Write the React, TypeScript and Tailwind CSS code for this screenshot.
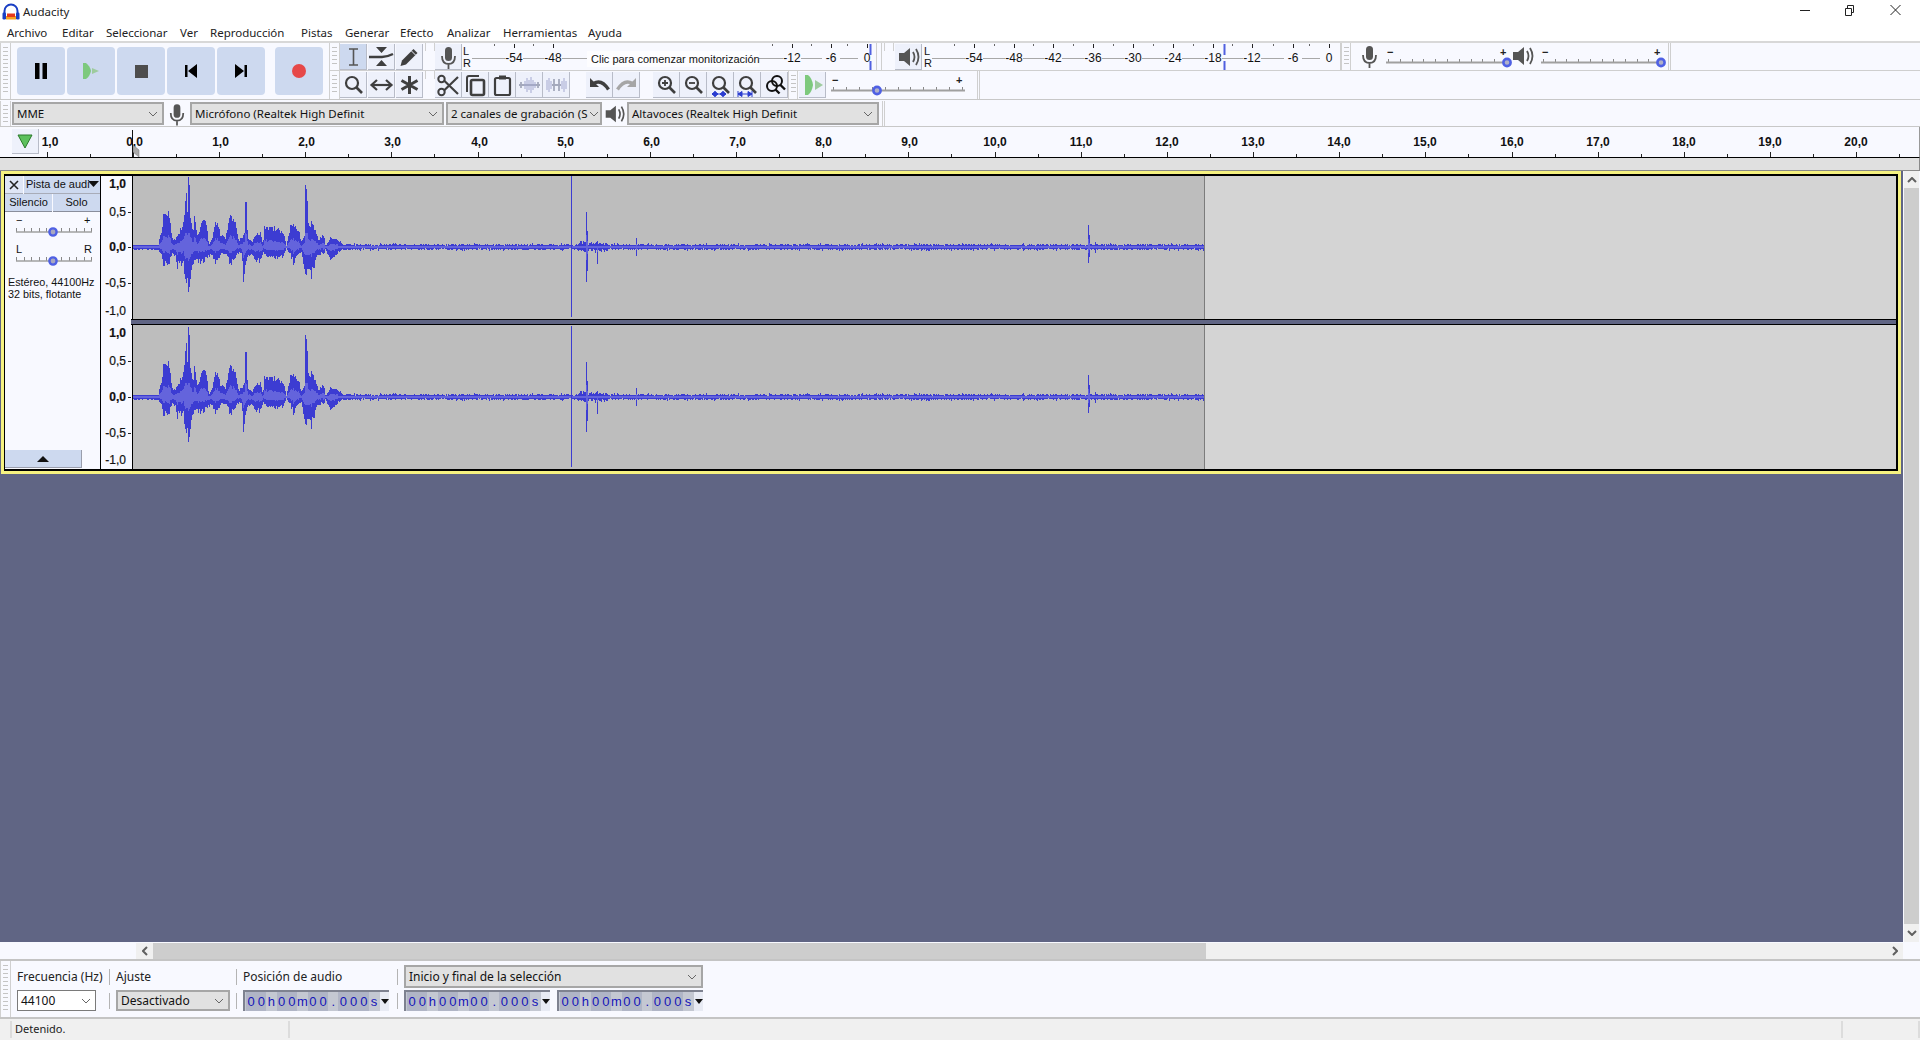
import React from "react";

const UI = "font-['Noto_Sans','Open_Sans',sans-serif]";
const AR = "font-['Liberation_Sans',Arial,sans-serif]";

function rng(seed: number) {
  return () => {
    seed |= 0;
    seed = (seed + 0x6d2b79f5) | 0;
    let t = Math.imul(seed ^ (seed >>> 15), 1 | seed);
    t = (t + Math.imul(t ^ (t >>> 7), 61 | t)) ^ t;
    return ((t ^ (t >>> 14)) >>> 0) / 4294967296;
  };
}

const K: number[][] = [
  [8, 205, 222], [85, 205, 222], [88, 170, 235], [95, 165, 240], [98, 100, 283], [103, 98, 280], [110, 100, 275], [116, 100, 270], [120, 125, 260], [125, 180, 240],
  [135, 190, 240], [140, 170, 300], [145, 170, 270], [150, 155, 270], [160, 130, 280], [165, 50, 320], [170, 100, 325], [174, 60, 330], [175, 3, 347], [177, 3, 347], [180, 100, 320],
  [185, 150, 280], [190, 150, 260], [192, 97, 260], [195, 120, 260], [200, 180, 265], [210, 140, 268], [218, 130, 268], [228, 125, 250], [235, 205, 245], [245, 185, 240],
  [255, 137, 265], [262, 135, 267], [270, 170, 240], [285, 185, 235], [298, 112, 270], [305, 115, 265], [315, 130, 245], [325, 190, 235], [335, 180, 240], [340, 175, 317],
  [343, 160, 317], [345, 78, 265], [347, 78, 265], [352, 180, 250], [365, 195, 235], [380, 165, 265], [390, 165, 270], [398, 205, 225], [402, 150, 240], [420, 150, 245],
  [440, 150, 250], [460, 165, 245], [468, 210, 215], [480, 145, 240], [490, 140, 270], [505, 155, 240], [512, 195, 225], [522, 180, 290], [525, 25, 295], [528, 25, 280], [531, 60, 280],
  [535, 140, 290], [542, 135, 305], [552, 150, 280], [565, 190, 235], [580, 170, 240], [586, 210, 218], [600, 180, 265], [615, 185, 240], [630, 195, 225], [640, 205, 220],
];

const SPIKES: Record<number, [number, number]> = {
  55: [70, 45], 56: [62, 40], 53: [54, 36],
  110: [12, 35], 112: [45, 18], 113: [45, 14],
  172: [62, 27], 173: [58, 28], 178: [26, 32],
  453: [35, 35], 454: [16, 24], 464: [6, 17], 503: [9, 9],
  955: [22, 16], 956: [12, 10], 962: [5, 6],
  438: [71, 70],
};

function wavePaths() {
  const r = rng(77);
  let peak = "";
  let rms = "";
  for (let x = 0; x < 1071; x++) {
    const zx = (x + 3) * 3;
    let top = 0;
    let bot = 0;
    if (zx <= 640) {
      let i = 0;
      while (i < K.length - 2 && K[i + 1][0] < zx) i++;
      const a = K[i];
      const b = K[i + 1];
      const t = Math.max(0, Math.min(1, (zx - a[0]) / (b[0] - a[0] || 1)));
      top = (212 - (a[1] + (b[1] - a[1]) * t)) / 3;
      bot = ((a[2] + (b[2] - a[2]) * t) - 212) / 3;
      top *= 0.76 + 0.24 * r();
      bot *= 0.62 + 0.38 * r();
    } else {
      top = 1.4 + r() * 1.6;
      bot = 1.4 + r() * 1.6;
      if (r() > 0.94) top += 1.5;
      if (r() > 0.94) bot += 1.5;
      if (x > 445 && x < 475) {
        top += r() * 3;
        bot += r() * 3;
      }
    }
    if (SPIKES[x]) {
      top = SPIKES[x][0];
      bot = SPIKES[x][1];
    }
    const R = (v: number) => Math.max(1, Math.round(v));
    peak += `M${x}.5 ${-R(top)}V${R(bot)}`;
    const rt = top > 6 ? top * (0.28 + 0.1 * r()) : 1;
    const rb = bot > 6 ? bot * (0.28 + 0.1 * r()) : 1;
    if (x !== 438) rms += `M${x}.5 ${-R(Math.min(rt, 14))}V${R(Math.min(rb, 14))}`;
  }
  return { peak, rms };
}
const WAVE = wavePaths();

function Wave({ h, c }: { h: number; c: number }) {
  return (
    <svg width={1071} height={h} viewBox={`0 ${-c} 1071 ${h}`} shapeRendering="crispEdges" className="block shrink-0">
      <path d={WAVE.peak} stroke="#3c3cd2" strokeWidth={1} fill="none" />
      <path d={WAVE.rms} stroke="#6464dc" strokeWidth={1} fill="none" />
    </svg>
  );
}

function Ico({ children, w = 27, h = 26 }: { children: React.ReactNode; w?: number; h?: number }) {
  return (
    <svg width={w} height={h} viewBox={`0 0 ${w} ${h}`} className="block">
      {children}
    </svg>
  );
}

const D = "#3f3f3f";
const IBeam = () => (
  <Ico><path d="M9 5h9M13.5 5v16M9 21h9" stroke="#555" strokeWidth={1.6} fill="none" /></Ico>
);
const Envelope = () => (
  <Ico>
    <path d="M8 3h11l-5.5 6zM8 22h11l-5.5-6z" fill={D} />
    <path d="M1 13h13q5 0 11-3" stroke={D} strokeWidth={2.4} fill="none" />
  </Ico>
);
const Pencil = () => (
  <Ico>
    <path d="M17.5 5l4 4L10 20.5l-5.5 1.5 1.5-5.5z" fill={D} />
    <path d="M15.5 7l4 4" stroke="#eef1fb" strokeWidth={1} />
  </Ico>
);
const Mag = ({ children }: { children?: React.ReactNode }) => (
  <Ico>
    <circle cx={12} cy={11} r={6} stroke={D} strokeWidth={2.2} fill="none" />
    <path d="M16.5 15.5L22 21" stroke={D} strokeWidth={2.6} />
    {children}
  </Ico>
);
const Arrows = () => (
  <Ico>
    <path d="M4 13h19" stroke={D} strokeWidth={2.2} />
    <path d="M9 8l-5.5 5 5.5 5M18 8l5.5 5-5.5 5" stroke={D} strokeWidth={2.2} fill="none" />
  </Ico>
);
const Star = () => (
  <Ico>
    <path d="M13.5 4v18M5.5 8.5l16 9M21.5 8.5l-16 9" stroke={D} strokeWidth={3} />
  </Ico>
);
const Cut = () => (
  <Ico>
    <circle cx={6.5} cy={20} r={3.2} stroke={D} strokeWidth={2} fill="none" />
    <circle cx={6.5} cy={7} r={3.2} stroke={D} strokeWidth={2} fill="none" />
    <path d="M9 18.5L23 5M9 8.5L23 22" stroke={D} strokeWidth={2.2} />
  </Ico>
);
const Copy = () => (
  <Ico>
    <path d="M5 20V6q0-2 2-2h10" stroke={D} strokeWidth={2} fill="none" />
    <rect x={9} y={8} width={13} height={15} rx={1.5} stroke={D} strokeWidth={2.6} fill="none" />
  </Ico>
);
const Paste = () => (
  <Ico>
    <rect x={6} y={6} width={15} height={17} rx={1.5} stroke={D} strokeWidth={2.2} fill="none" />
    <path d="M10 3.5h7v4h-7z" fill={D} />
  </Ico>
);
const Trim = () => (
  <Ico>
    <path d="M5 10v6M22 10v6M3 13h21" stroke="#a4a9bc" strokeWidth={1.8} fill="none" />
    <path d="M9 9v8M11 6v14M13 8v10M15 5v16M17 8v10M19 10v6" stroke="#a4a9d0" strokeWidth={1} />
  </Ico>
);
const Silence = () => (
  <Ico>
    <path d="M4 8v10M6 6v14M8 9v8M19 9v8M21 6v14M23 9v8" stroke="#a4a9d0" strokeWidth={1} />
    <path d="M11 7v12M16 7v12M9 13h9" stroke="#a4a9bc" strokeWidth={1.8} fill="none" />
  </Ico>
);
const Undo = ({ c = D }: { c?: string }) => (
  <Ico>
    <path d="M4 6v9h9z" fill={c} />
    <path d="M7.5 11.5q8-5 15 6" stroke={c} strokeWidth={3.4} fill="none" />
  </Ico>
);
const Redo = () => (
  <Ico>
    <g transform="matrix(-1 0 0 1 27 0)"><path d="M4 6v9h9z" fill="#a6a6a6" /><path d="M7.5 11.5q8-5 15 6" stroke="#a6a6a6" strokeWidth={3.4} fill="none" /></g>
  </Ico>
);
const Mic = ({ c = "#555" }: { c?: string }) => (
  <Ico>
    <rect x={10} y={3} width={7} height={14} rx={3.5} fill={c} />
    <path d="M7 12q0 8 6.5 8t6.5-8M13.5 20v5" stroke={c} strokeWidth={1.8} fill="none" />
  </Ico>
);
const Spk = ({ c = "#555" }: { c?: string }) => (
  <Ico>
    <path d="M4 9h5l6-5v18l-6-5H4z" fill={c} />
    <path d="M18 8q3 5 0 10M21 5q5 8 0 16" stroke={c} strokeWidth={1.8} fill="none" />
  </Ico>
);
const PlayGreen = () => (
  <Ico>
    <path d="M6 3h3q4 3 5 10-1 7-5 10H6z" fill="#7dc97d" />
    <path d="M16 8l8 5-8 5z" fill="#9ecb9e" />
  </Ico>
);
const Logo = () => (
  <svg width={18} height={18} viewBox="0 0 18 18" className="block">
    <path d="M2.5 11V8a6.5 6.5 0 0 1 13 0v3" stroke="#1a3fc4" strokeWidth={2} fill="none" />
    <rect x={0.5} y={9.5} width={3.5} height={7} rx={1.2} fill="#1a3fc4" />
    <rect x={14} y={9.5} width={3.5} height={7} rx={1.2} fill="#1a3fc4" />
    <path d="M4 13h10v3.5H4z" fill="#f6a020" />
    <path d="M5 10.5h8v3.5H5z" fill="#e8391c" />
  </svg>
);

function Btn({ children, on, mr }: { children: React.ReactNode; on?: boolean; mr?: string }) {
  return (
    <div
      className={`w-[27px] h-[26px] shrink-0 border-r border-b border-[#b8bcc8] ${on ? "bg-[#cdd9ef]" : "bg-[#eef1fb]"} ${mr ?? ""}`}
    >
      {children}
    </div>
  );
}

function Gripper({ w = "w-[10px]" }: { w?: string }) {
  return (
    <div className={`${w} self-stretch shrink-0 flex justify-center border-x border-[#d0d0d0] py-[4px]`}>
      <div className="w-[5px] h-full bg-[repeating-linear-gradient(180deg,#c4c4c4_0,#c4c4c4_1px,transparent_1px,transparent_4px)]" />
    </div>
  );
}

function TBtn({ children }: { children: React.ReactNode }) {
  return <div className="w-[48px] h-[48px] rounded-[4px] bg-[#cdd9ef] flex items-center justify-center shrink-0">{children}</div>;
}

function Combo({ w, text, tone = "bg-[#e1e1e1] border-[#a6a6a6]", h = "h-[23px]", size = "text-[11.5px]" }: { w: string; text: string; tone?: string; h?: string; size?: string }) {
  return (
    <div className={`${w} ${h} ${tone} ${size} shrink-0 border-2 flex items-center justify-between pl-[3px] pr-[4px] text-[#111] whitespace-nowrap overflow-hidden ${UI}`}>
      <span className="leading-[16px]">{text}</span>
      <svg width={10} height={6} viewBox="0 0 10 6" className="shrink-0 ml-[2px]"><path d="M1 1l4 4 4-4" stroke="#666" strokeWidth={1} fill="none" /></svg>
    </div>
  );
}

function Meter({ w, labels, blue, tip }: { w: number; labels: [string, number][]; blue: number; tip?: boolean }) {
  return (
    <svg width={w} height={28} viewBox={`0 0 ${w} 28`} className={`block shrink-0 ${AR}`}>
      <path d={`M0 15.5H${w}`} stroke="#a8a8a8" />
      {labels.map(([t, x], i) => (
        <g key={i}>
          <path d={`M${x}.5 1v4`} stroke="#222" />
          <path d={`M${x - 20}.5 1v2`} stroke="#666" />
          <rect x={x - 9} y={8} width={18} height={13} fill="#f8f9ff" />
          <text x={x} y={19} textAnchor="middle" fontSize={12} fill="#111">{t}</text>
        </g>
      ))}
      {tip && (
        <g>
          <rect x={115} y={8} width={172} height={16} fill="#fdfdff" />
          <text x={119} y={20} fontSize={11} fill="#111">Clic para comenzar monitorización</text>
        </g>
      )}
      <path d={`M${blue}.5 1v11M${blue}.5 18v9`} stroke="#5060e0" strokeWidth={2} />
    </svg>
  );
}

function Slider({ w, x }: { w: number; x: number }) {
  const ticks = [];
  for (let i = 0; i <= 10; i++) ticks.push(Math.round(2 + ((w - 8) * i) / 10));
  return (
    <svg width={w} height={28} viewBox={`0 0 ${w} 28`} className={`block shrink-0 ${AR}`}>
      <text x={1} y={13} fontSize={11} fontWeight={700} fill="#222">−</text>
      <text x={w - 12} y={13} fontSize={11} fontWeight={700} fill="#222">+</text>
      {ticks.map((t, i) => <path key={i} d={`M${t}.5 16v3`} stroke="#888" />)}
      <path d={`M0 19.5H${w - 3}`} stroke="#a0a0a0" strokeWidth={2} />
      <circle cx={x} cy={19.5} r={3.6} stroke="#4f60e4" strokeWidth={2.6} fill="#b0b0c8" />
    </svg>
  );
}

function Ruler() {
  const o = 133;
  const step = 86.16;
  const lab: React.ReactNode[] = [];
  for (let i = -1; i <= 20; i++) {
    const x = Math.round(o + step * i);
    const t = `${Math.abs(i)},0`;
    lab.push(
      <g key={i}>
        <path d={`M${x}.5 25v5`} stroke="#222" />
        <path d={`M${Math.round(x + step / 2)}.5 27v3`} stroke="#222" />
        <text x={x + (i < 0 ? 3 : i >= 10 ? 0 : 1.5)} y={19} textAnchor="middle" fontSize={12} fontWeight={700} fill="#111">{t}</text>
      </g>
    );
  }
  return (
    <svg width={1880} height={30} viewBox="39 0 1880 30" className={`block shrink-0 ${AR}`}>
      {lab}
      <path d="M133 18l6 5v7l-6-5z" fill="#a8a8a8" stroke="#777" strokeWidth={0.5} />
      <path d="M132.5 3v27" stroke="#111" />
    </svg>
  );
}

function VRuler({ ys }: { ys: [string, number][] }) {
  return (
    <svg width={31} height={ys[4][1] + 8} viewBox={`0 0 31 ${ys[4][1] + 8}`} className={`block ${AR}`}>
      {ys.map(([t, y]) => (
        <g key={t}>
          <text x={25} y={y + 4} textAnchor="end" fontSize={12} fontWeight={t === "1,0" || t === "0,0" ? 700 : 400} stroke="#111" strokeWidth={0.2} fill="#111">{t}</text>
          {t !== "1,0" && t !== "-1,0" && <path d={`M27 ${y}.5h3`} stroke="#222" />}
        </g>
      ))}
    </svg>
  );
}

function TrackRow({ h, c, ys }: { h: string; c: number; ys: [string, number][] }) {
  const px = h === "h-[143px]" ? 143 : 144;
  return (
    <div className={`${h} flex shrink-0`}>
      <div className="w-[32px] shrink-0 bg-[#f8f9ff] border-r border-black"><VRuler ys={ys} /></div>
      <div className="w-[1072px] shrink-0 bg-[#bdbdbd] border-r border-[#7c7c7c]"><Wave h={px} c={c} /></div>
      <div className="flex-1 bg-[#d4d4d4]" />
    </div>
  );
}

function PanelSlider({ l, r }: { l: string; r: string }) {
  const t = [];
  for (let i = 0; i <= 10; i++) t.push(Math.round(0 + 7.5 * i));
  return (
    <svg width={78} height={28} viewBox="0 0 78 28" className={`block ${AR}`}>
      <text x={0} y={10} fontSize={11} fill="#111">{l}</text>
      <text x={68} y={10} fontSize={11} fill="#111">{r}</text>
      {t.map((x, i) => <path key={i} d={`M${x}.5 14v4`} stroke="#888" />)}
      <path d="M0 18h76" stroke="#a0a0a0" strokeWidth={1.6} />
      <circle cx={37} cy={18} r={3.6} stroke="#4f60e4" strokeWidth={2.4} fill="#a8a8c0" />
    </svg>
  );
}

function Panel() {
  return (
    <div className={`w-[96px] shrink-0 bg-[#f8f9ff] border-r border-black flex flex-col ${AR} text-[#111]`}>
      <div className="flex h-[18px] gap-px">
        <div className="w-[18px] bg-[#dfe6f6] border-b border-[#a8acb8] flex items-center justify-center">
          <svg width={10} height={10} viewBox="0 0 10 10"><path d="M1 1l8 8M9 1l-8 8" stroke="#222" strokeWidth={1.6} /></svg>
        </div>
        <div className="w-[76px] bg-[#cdd9ef] border-b border-[#a8acb8] flex items-center pl-[2px] text-[11px] whitespace-nowrap relative">
          Pista de audi
          <svg width={11} height={6} viewBox="0 0 11 6" className="absolute right-[1px] top-[5px]"><path d="M0 0h11L5.5 6z" fill="#111" /></svg>
        </div>
      </div>
      <div className="flex h-[18px] gap-px text-[11px]">
        <div className="w-[47px] bg-[#cdd9ef] border-b border-[#8a8e9c] flex items-center justify-center">Silencio</div>
        <div className="w-[47px] bg-[#cdd9ef] border-b border-[#8a8e9c] flex items-center justify-center">Solo</div>
      </div>
      <div className="ml-[11px] mt-[2px]"><PanelSlider l="−" r="+" /></div>
      <div className="ml-[11px] mt-px"><PanelSlider l="L" r="R" /></div>
      <div className="ml-[3px] mt-[5px] text-[10.8px] leading-[12px]">
        <div>Estéreo, 44100Hz</div>
        <div>32 bits, flotante</div>
      </div>
      <div className="flex-1" />
      <div className="w-[77px] h-[18px] bg-[#cdd9ef] border-r border-b border-[#9a9eac] flex items-center justify-center mb-[1px]">
        <svg width={12} height={6} viewBox="0 0 12 6"><path d="M0 6h12L6 0z" fill="#111" /></svg>
      </div>
    </div>
  );
}

function TimeField({ w }: { w: string }) {
  const s = "00h00m00.000s".split("");
  return (
    <div className={`${w} h-[21px] shrink-0 flex border-t-2 border-l-2 border-[#7e8290] bg-[#c4c8d2]`}>
      <div className="flex-1 flex justify-between pl-[1px] pr-[1px] items-stretch">
        {s.map((c, i) => {
          const digit = c >= "0" && c <= "9";
          return (
            <span key={i} className={`flex-1 flex items-center justify-center text-[13px] leading-none text-[#1414b8] ${AR} ${digit ? "bg-[#b0b5c6]" : ""}`}>{c}</span>
          );
        })}
      </div>
      <div className="w-[9px] bg-[#e8ebf4] flex items-center justify-center">
        <svg width={8} height={5} viewBox="0 0 8 5"><path d="M0 0h8L4 5z" fill="#111" /></svg>
      </div>
    </div>
  );
}

const Sep = () => <div className="w-px h-[16px] bg-[#b4b4b4] shrink-0" />;

export default function App() {
  return (
    <div className={`w-[1920px] h-[1040px] overflow-hidden flex flex-col bg-[#f8f9ff] text-[#111] ${UI}`}>
      {/* title */}
      <div className="h-[24px] bg-white flex items-center shrink-0">
        <div className="ml-[2px]"><Logo /></div>
        <span className="ml-[3px] text-[11.5px] text-[#222]">Audacity</span>
        <div className="flex-1" />
        <svg width={120} height={20} viewBox="0 0 120 20" className="block -mt-[4px]">
          <path d="M0 10.5h10" stroke="#222" />
          <path d="M45.5 8.5h6v7h-6zM47.5 8V5.5h6v7H52" stroke="#222" fill="none" />
          <path d="M90.5 5l10 10M100.5 5l-10 10" stroke="#222" />
        </svg>
      </div>
      {/* menu */}
      <div className="h-[17px] bg-white flex items-center text-[11.5px] text-[#222] shrink-0 pl-[7px]">
        <span className="w-[55px]">Archivo</span>
        <span className="w-[44px]">Editar</span>
        <span className="w-[74px]">Seleccionar</span>
        <span className="w-[30px]">Ver</span>
        <span className="w-[91px]">Reproducción</span>
        <span className="w-[44px]">Pistas</span>
        <span className="w-[55px]">Generar</span>
        <span className="w-[47px]">Efecto</span>
        <span className="w-[56px]">Analizar</span>
        <span className="w-[85px]">Herramientas</span>
        <span>Ayuda</span>
      </div>
      <div className="h-[2px] bg-[#d8d8d8] shrink-0" />
      {/* toolbars */}
      <div className="flex shrink-0 h-[57px] border-b border-[#c8c8c8]">
        <div className="w-[329px] shrink-0 flex items-center">
          <Gripper w="w-[11px]" />
          <div className="ml-[6px] flex gap-[2px]">
            <TBtn><svg width={16} height={18} viewBox="0 0 16 18"><path d="M2 1h4.5v16H2zM9.5 1H14v16H9.5z" fill="#000" /></svg></TBtn>
            <TBtn><Ico w={20} h={20}><path d="M2 2h3q4 3 5 8-1 5-5 8H2z" fill="#7dc97d" /><path d="M11 7l7 3-7 3z" fill="#9ecb9e" /></Ico></TBtn>
            <TBtn><div className="w-[13px] h-[13px] bg-[#4d4d4d]" /></TBtn>
            <TBtn><svg width={14} height={14} viewBox="0 0 14 14"><path d="M1 1h2.5v12H1zM13 0v14L4 7z" fill="#000" /></svg></TBtn>
            <TBtn><svg width={14} height={14} viewBox="0 0 14 14"><path d="M13 1h-2.5v12H13zM1 0v14l9-7z" fill="#000" /></svg></TBtn>
          </div>
          <div className="ml-[10px]"><TBtn><div className="w-[14px] h-[14px] rounded-full bg-[#e64848]" /></TBtn></div>
        </div>
        <div className="flex-1 flex flex-col">
          <div className="h-[28px] flex border-b border-[#cfcfcf] shrink-0">
            <Gripper w="w-[11px]" />
            <div className="flex gap-px pt-px">
              <Btn on><IBeam /></Btn><Btn><Envelope /></Btn><Btn><Pencil /></Btn>
            </div>
            <div className="ml-[2px]"><Gripper w="w-[10px]" /></div>
            <div className="pt-px"><Btn><Mic /></Btn></div>
            <div className={`w-[10px] shrink-0 text-[11px] leading-[12px] pt-[2px] pl-px ${AR}`}><div>L</div><div>R</div></div>
            <Meter w={400} tip blue={398} labels={[["-54", 42], ["-48", 81], ["-12", 320], ["-6", 359], ["0", 395]]} />
            <div className="ml-[4px] w-[6px] border-x border-[#cfcfcf] self-stretch shrink-0" />
            <div className="ml-[2px]"><Gripper w="w-[10px]" /></div>
            <div className="ml-px pt-px"><Btn><Spk /></Btn></div>
            <div className={`w-[10px] shrink-0 text-[11px] leading-[12px] pt-[2px] pl-[2px] ${AR}`}><div>L</div><div>R</div></div>
            <Meter w={401} blue={292} labels={[["-54", 42], ["-48", 82], ["-42", 121], ["-36", 161], ["-30", 201], ["-24", 241], ["-18", 281], ["-12", 320], ["-6", 361], ["0", 397]]} />
            <div className="ml-[4px] w-[4px] border-r border-[#cfcfcf] self-stretch shrink-0" />
            <Gripper w="w-[10px]" />
            <div className="ml-[5px] w-[27px]"><Mic /></div>
            <div className="ml-[3px]"><Slider w={126} x={121} /></div>
            <div className="w-[27px] -ml-[3px]"><Spk /></div>
            <div className="ml-[5px]"><Slider w={125} x={120} /></div>
            <div className="ml-[2px] w-[3px] border-x border-[#cfcfcf] self-stretch shrink-0" />
          </div>
          <div className="flex-1 flex">
            <Gripper w="w-[11px]" />
            <div className="flex gap-px pt-px">
              <Btn><Mag /></Btn><Btn><Arrows /></Btn><Btn><Star /></Btn>
            </div>
            <div className="ml-[2px]"><Gripper w="w-[10px]" /></div>
            <div className="flex pt-px">
              <Btn><Cut /></Btn><Btn><Copy /></Btn><Btn><Paste /></Btn><Btn><Trim /></Btn><Btn><Silence /></Btn>
            </div>
            <div className="ml-[16px] flex pt-px">
              <Btn><Undo /></Btn><Btn><Redo /></Btn>
            </div>
            <div className="ml-[13px] flex pt-px">
              <Btn><Mag><path d="M9 11h6M12 8v6" stroke={D} strokeWidth={1.8} /></Mag></Btn>
              <Btn><Mag><path d="M9 11h6" stroke={D} strokeWidth={1.8} /></Mag></Btn>
              <Btn><Mag><path d="M5 22h14M5 22l3-2.5v5zM19 22l-3-2.5v5zM11 22l-3-2.5v5zM13 22l3-2.5v5z" stroke="#2a3cd0" strokeWidth={1} fill="#2a3cd0" /></Mag></Btn>
              <Btn><Mag><path d="M4 22h14M4 19v6M18 19v6M4 22l4-2.5v5zM18 22l-4-2.5v5z" stroke="#2a3cd0" strokeWidth={1} fill="#2a3cd0" /></Mag></Btn>
              <Btn><Ico>
                <circle cx={11} cy={14} r={5} stroke="#111" strokeWidth={2} fill="none" />
                <circle cx={16} cy={9} r={5} stroke="#111" strokeWidth={2} fill="none" />
                <path d="M19 12.5l5 5M14.5 17.5l4 4" stroke="#111" strokeWidth={2.4} />
              </Ico></Btn>
            </div>
            <Gripper w="w-[10px]" />
            <div className="ml-px pt-px"><Btn><PlayGreen /></Btn></div>
            <div className="ml-[5px]"><Slider w={137} x={46} /></div>
            <div className="ml-[9px] w-[3px] border-x border-[#cfcfcf] self-stretch shrink-0" />
          </div>
        </div>
      </div>
      {/* devices */}
      <div className="h-[27px] shrink-0 flex items-center border-b border-[#c8c8c8] pt-px">
        <Gripper w="w-[11px]" />
        <div className="ml-px"><Combo w="w-[152px]" text="MME" /></div>
        <div className="w-[26px] flex justify-center"><Mic /></div>
        <Combo w="w-[254px]" text="Micrófono (Realtek High Definit" />
        <div className="ml-[2px]"><Combo w="w-[156px]" text="2 canales de grabación (S" /></div>
        <div className="w-[25px] flex justify-center"><Spk /></div>
        <Combo w="w-[252px]" text="Altavoces (Realtek High Definit" />
        <div className="ml-[3px] w-[3px] border-x border-[#cfcfcf] self-stretch shrink-0" />
      </div>
      {/* ruler */}
      <div className="h-[30px] shrink-0 flex items-start border-b border-black border-r border-r-[#999] box-content">
        <div className="ml-[12px] mt-[2px] w-[27px] h-[25px] bg-[#eef1fb] border-r border-b border-[#b8bcc8] flex items-center justify-center shrink-0">
          <svg width={16} height={15} viewBox="0 0 16 15"><path d="M1 1h14L8 14z" fill="#5cc05c" stroke="#2a7a2a" /></svg>
        </div>
        <Ruler />
      </div>
      <div className="h-[12px] shrink-0 bg-[#e0e0e0] border-b border-r border-[#8a8a8a] box-content" />
      {/* tracks + vscroll */}
      <div className="flex-1 min-h-0 flex">
        <div className="w-[1903px] shrink-0 bg-[#606584] pl-px">
          <div className="w-[1900px] h-[303px] bg-[#f6f280] p-[3px]">
            <div className="h-full border-x border-y-2 border-black border-r-2 flex">
              <Panel />
              <div className="flex-1 flex flex-col min-w-0">
                <TrackRow h="h-[143px]" c={71} ys={[["1,0", 8], ["0,5", 36], ["0,0", 71], ["-0,5", 107], ["-1,0", 135]]} />
                <div className="h-[6px] shrink-0 flex">
                  <div className="w-[30px] bg-[#f8f9ff]" />
                  <div className="flex-1 bg-[#606584] border-y border-black" />
                </div>
                <TrackRow h="h-[144px]" c={72} ys={[["1,0", 8], ["0,5", 36], ["0,0", 72], ["-0,5", 108], ["-1,0", 135]]} />
              </div>
            </div>
          </div>
        </div>
        <div className="flex-1 flex flex-col pl-px pr-px">
          <div className="h-[17px] bg-[#f0f0f0] flex items-center justify-center">
            <svg width={10} height={6} viewBox="0 0 10 6"><path d="M1 5l4-4 4 4" stroke="#606060" strokeWidth={2} fill="none" /></svg>
          </div>
          <div className="flex-1 bg-[#cdcdcd]" />
          <div className="h-[18px] bg-[#f0f0f0] flex items-center justify-center">
            <svg width={10} height={6} viewBox="0 0 10 6"><path d="M1 1l4 4 4-4" stroke="#606060" strokeWidth={2} fill="none" /></svg>
          </div>
        </div>
      </div>
      {/* hscroll */}
      <div className="h-[17px] shrink-0 flex pt-px">
        <div className="w-[136px] bg-[#f8f9ff]" />
        <div className="w-[17px] bg-[#f0f0f0] flex items-center justify-center">
          <svg width={6} height={10} viewBox="0 0 6 10"><path d="M5 1L1 5l4 4" stroke="#606060" strokeWidth={2} fill="none" /></svg>
        </div>
        <div className="w-[1053px] bg-[#cdcdcd]" />
        <div className="w-[697px] bg-[#f0f0f0] flex items-center justify-end pr-[5px]">
          <svg width={6} height={10} viewBox="0 0 6 10"><path d="M1 1l4 4-4 4" stroke="#606060" strokeWidth={2} fill="none" /></svg>
        </div>
      </div>
      {/* selection toolbar */}
      <div className="h-[58px] shrink-0 flex border-t-2 border-[#c4c4c4]">
        <Gripper w="w-[11px]" />
        <div className="flex flex-col pt-[4px] gap-[2px]">
          <div className="flex items-center h-[23px] text-[12px] text-[#222] whitespace-nowrap">
            <span className="ml-[6px] w-[92px]">Frecuencia (Hz)</span><Sep />
            <span className="ml-[6px] w-[120px]">Ajuste</span><Sep />
            <span className="ml-[6px] w-[154px]">Posición de audio</span><Sep />
            <div className="ml-[6px]"><Combo w="w-[299px]" size="text-[12px]" text="Inicio y final de la selección" /></div>
          </div>
          <div className="flex items-center h-[21px]">
            <div className="ml-[6px] mr-[13px]"><Combo w="w-[79px]" h="h-[21px]" size="text-[12px]" tone="bg-white border-[#7a7a7a] !border" text="44100" /></div><Sep />
            <div className="ml-[6px] mr-[6px]"><Combo w="w-[114px]" h="h-[21px]" size="text-[12px]" text="Desactivado" /></div><Sep />
            <div className="ml-[6px] mr-[8px]"><TimeField w="w-[146px]" /></div><Sep />
            <div className="ml-[6px] flex gap-[7px]"><TimeField w="w-[146px]" /><TimeField w="w-[146px]" /></div>
          </div>
        </div>
      </div>
      {/* status */}
      <div className="h-[23px] shrink-0 flex bg-[#f0f0f0] border-t-2 border-[#c4c4c4] text-[11px] text-[#222] py-[2px]">
        <div className="w-[10px]" />
        <div className="w-[278px] border-l-2 border-[#dcdcdc] pl-[3px] flex items-center">Detenido.</div>
        <div className="w-[1553px] border-l-2 border-[#dcdcdc]" />
        <div className="flex-1 border-x-2 border-[#dcdcdc]" />
      </div>
    </div>
  );
}
